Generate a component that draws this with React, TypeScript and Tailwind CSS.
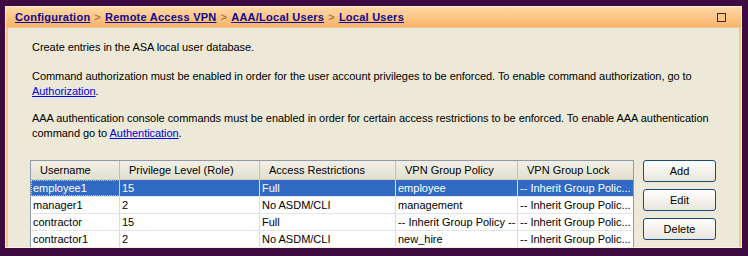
import React from "react";

const rows = [
  ["employee1", "15", "Full", "employee", "-- Inherit Group Polic..."],
  ["manager1", "2", "No ASDM/CLI", "management", "-- Inherit Group Polic..."],
  ["contractor", "15", "Full", "-- Inherit Group Policy --", "-- Inherit Group Polic..."],
  ["contractor1", "2", "No ASDM/CLI", "new_hire", "-- Inherit Group Polic..."],
];

const headers = ["Username", "Privilege Level (Role)", "Access Restrictions", "VPN Group Policy", "VPN Group Lock"];
const widths = ["w-[89px]", "w-[140px]", "w-[136px]", "w-[122px]", "w-[115px]"];

function Sep() {
  return <span className="text-[#b07a45] no-underline mx-[4px]">&gt;</span>;
}

function Btn({ label }: { label: string }) {
  return (
    <button className="w-[73px] h-[22px] rounded-[3px] border border-[#1c4a7c] bg-gradient-to-b from-[#ffffff] to-[#e8e6dc] text-[11px] text-black leading-none flex items-center justify-center">
      {label}
    </button>
  );
}

export default function App() {
  return (
    <div
      className="w-[748px] h-[256px] bg-[#3d0b3f] pt-[6px] pl-[5px] overflow-hidden"
      style={{ fontFamily: '"Liberation Sans", Arial, sans-serif' }}
    >
      <div className="w-[737px] h-[242px] border border-[#fbeedd] flex flex-col overflow-hidden">
        {/* header */}
        <div className="h-[21px] shrink-0 bg-gradient-to-b from-[#ffd8a6] to-[#fab468] flex items-center pl-[9px] pr-[15px] border-b border-[#f3c690]">
          <div className="flex-1 text-[11px] font-bold text-[#0a0a96] whitespace-nowrap tracking-[0.25px]">
            <span className="underline">Configuration</span>
            <Sep />
            <span className="underline">Remote Access VPN</span>
            <Sep />
            <span className="underline">AAA/Local Users</span>
            <Sep />
            <span className="underline">Local Users</span>
          </div>
          <div className="w-[9px] h-[9px] border border-[#3a2a1a] bg-[#fcc485]" />
        </div>
        {/* body */}
        <div className="flex-1 bg-[#ece9d8] border-x-2 border-[#f6c487] pl-[22px] pr-[22px] pt-[12px] overflow-hidden text-[11px] text-black">
          <div className="pl-[2px] leading-[15px] tracking-[-0.05px]">
            <p className="mb-[14px]">Create entries in the ASA local user database.</p>
            <p className="mb-[12px]">
              Command authorization must be enabled in order for the user account privileges to be enforced. To enable command authorization, go to
              <br />
              <span className="text-[#0000e0] underline">Authorization</span>.
            </p>
            <p>
              AAA authentication console commands must be enabled in order for certain access restrictions to be enforced. To enable AAA authentication
              <br />
              command go to <span className="text-[#0000e0] underline">Authentication</span>.
            </p>
          </div>
          <div className="flex mt-[19px] gap-[9px]">
            <div className="w-[604px] shrink-0 border border-[#8e9aa8] bg-white">
              <div className="flex h-[19px] bg-gradient-to-b from-[#f2f0e6] to-[#e3e0d0] border-b border-[#d2cebd]">
                {headers.map((h, i) => (
                  <div
                    key={h}
                    className={`${widths[i]} shrink-0 h-full flex items-center pl-[9px] whitespace-nowrap ${i < 4 ? "border-r border-[#c4c0ae]" : ""}`}
                  >
                    {h}
                  </div>
                ))}
              </div>
              {rows.map((r, ri) => (
                <div
                  key={ri}
                  className={`flex h-[17px] border-b border-[#e4e4e4] ${ri === 0 ? "bg-[#316ac5] text-white" : "text-black"}`}
                >
                  {r.map((c, ci) => (
                    <div
                      key={ci}
                      className={`${widths[ci]} shrink-0 h-full flex items-center pl-[2px] whitespace-nowrap overflow-hidden ${ci < 4 ? "border-r border-[#dcdcdc]" : ""} ${ri === 0 && ci === 0 ? "outline-1 outline-dotted outline-[#c8c8c8] -outline-offset-1" : ""}`}
                    >
                      {c}
                    </div>
                  ))}
                </div>
              ))}
            </div>
            <div className="flex flex-col gap-[7px]">
              <Btn label="Add" />
              <Btn label="Edit" />
              <Btn label="Delete" />
            </div>
          </div>
        </div>
      </div>
    </div>
  );
}
